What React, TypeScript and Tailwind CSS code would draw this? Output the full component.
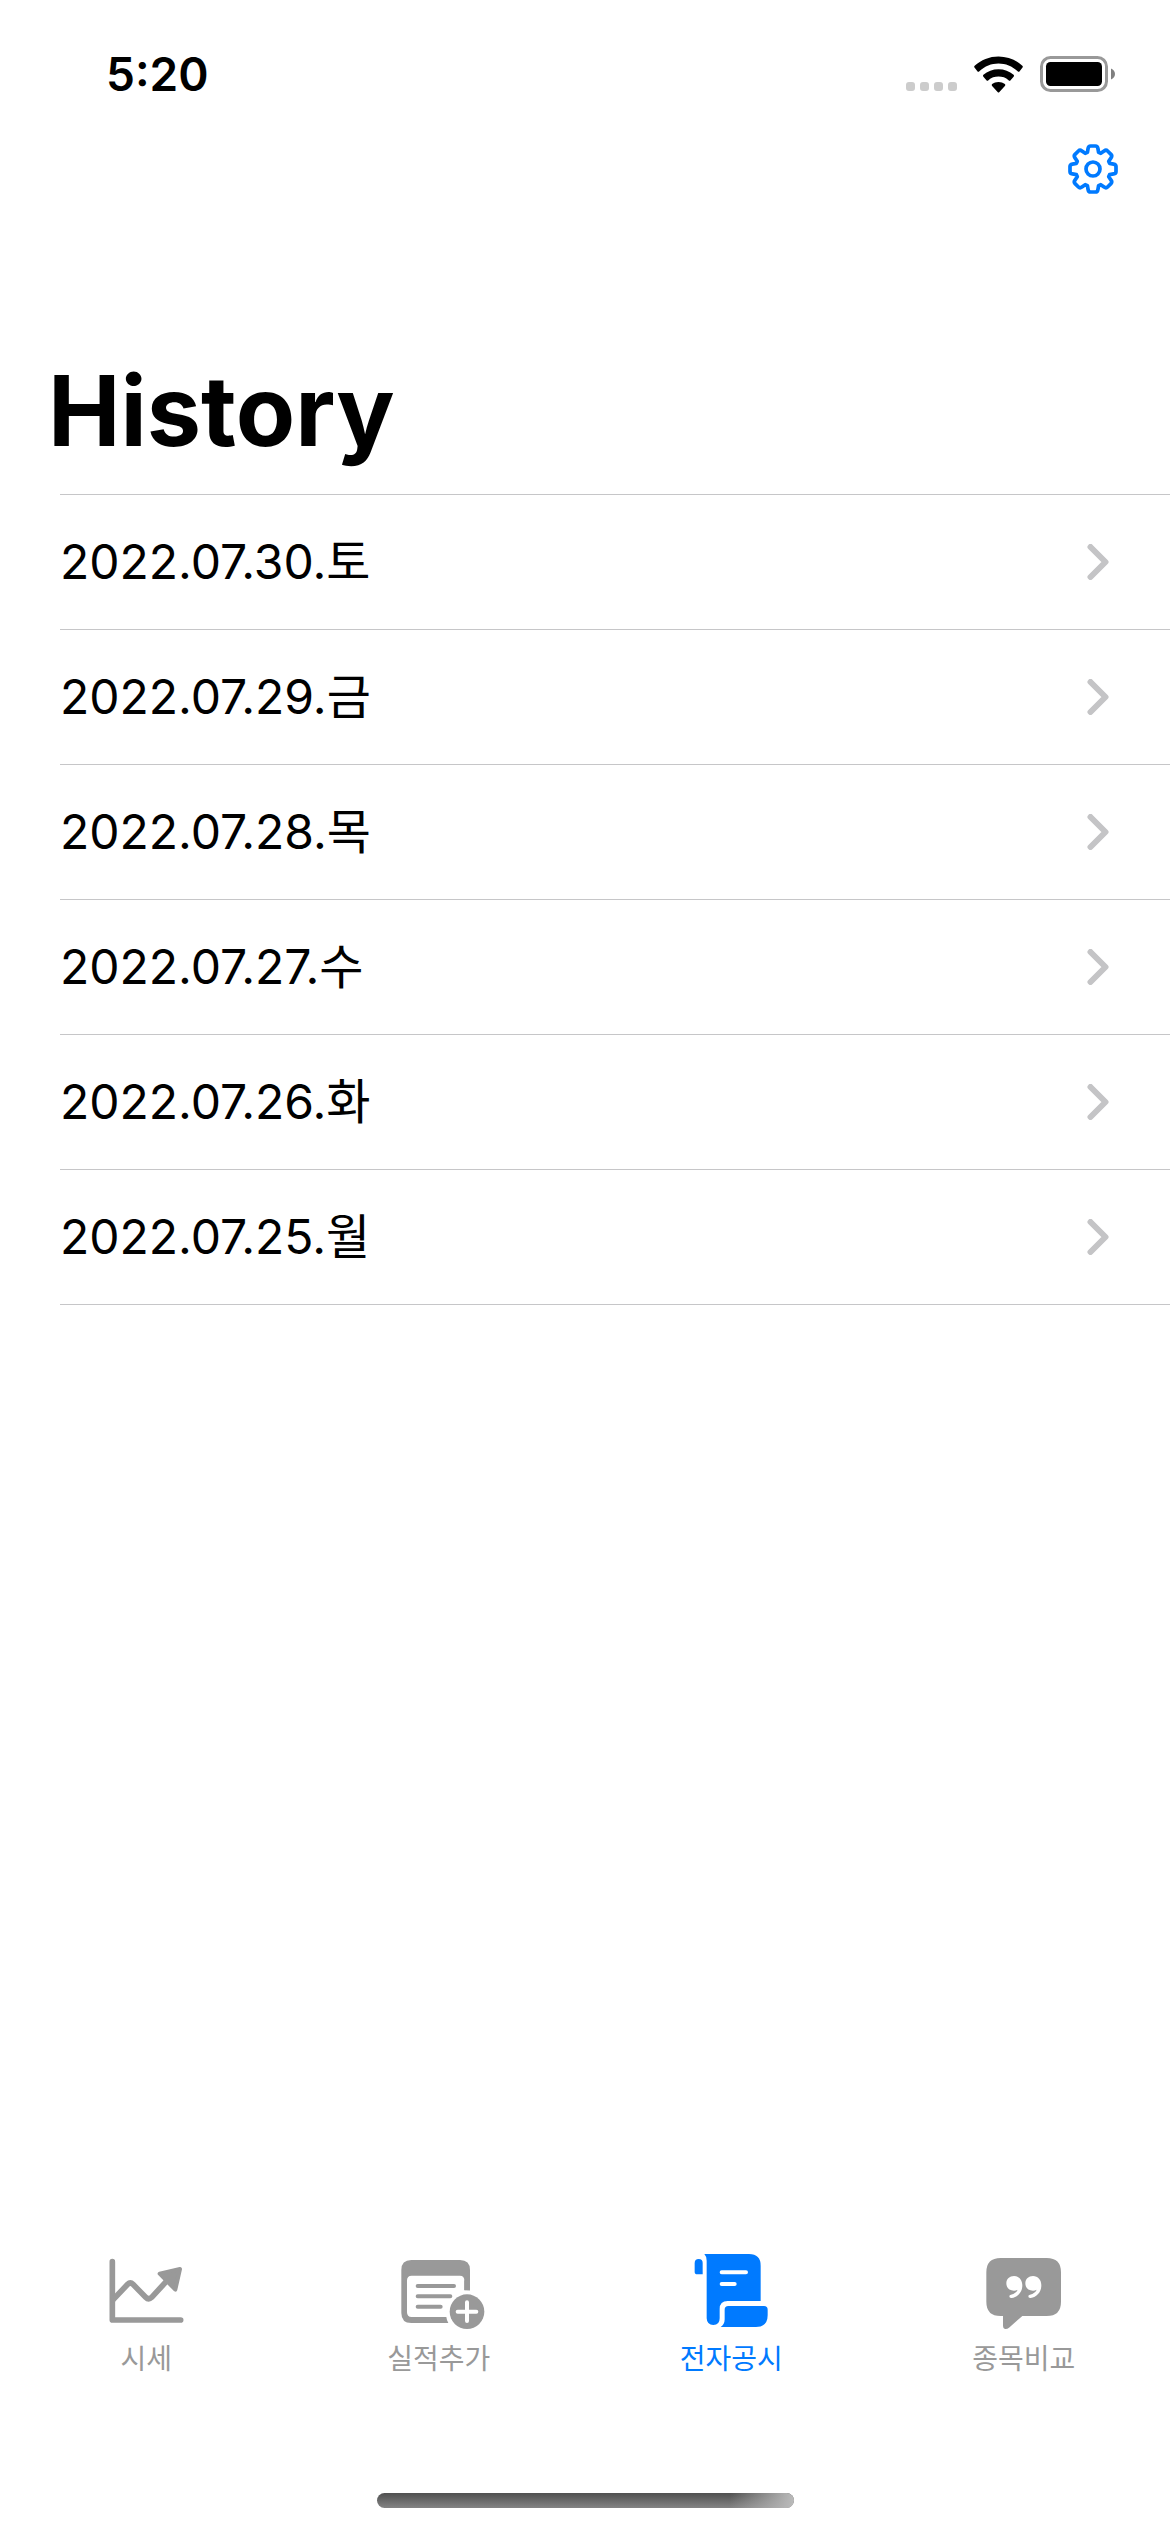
import type { ReactNode } from "react";

const dates = [
  "2022.07.30.토",
  "2022.07.29.금",
  "2022.07.28.목",
  "2022.07.27.수",
  "2022.07.26.화",
  "2022.07.25.월",
];

function SignalDots() {
  return (
    <svg viewBox="0 0 51 9" className="h-[9px] w-[51px] fill-[#cccccc]" aria-hidden="true">
      {[0, 14, 28, 42].map((x) => (
        <rect key={x} x={x} width="9" height="9" rx="3" />
      ))}
    </svg>
  );
}

function WifiIcon() {
  return (
    <svg viewBox="284 74 146 110" className="h-[37px] w-[49px]" fill="black" aria-hidden="true">
      <path d="M357 75C384 75 409 85 428 103Q431 106 428 109L420 119Q417 122 414 119C398 104 378 96 357 96S316 104 300 119Q297 122 294 119L286 109Q283 106 286 103C305 85 330 75 357 75Z" />
      <path d="M357 113C374 113 390 119 402 130Q405 133 402 136L393 146Q390 149 387 146C379 138 368 135 357 135S335 138 327 146Q324 149 321 146L312 136Q309 133 312 130C324 119 340 113 357 113Z" />
      <path d="M357 151C364 151 371 153 376 157Q379 160 376 163L359 182Q357 184 355 182L338 163Q335 160 338 157C343 153 350 151 357 151Z" />
    </svg>
  );
}

function BatteryIcon() {
  return (
    <svg viewBox="0 0 75 36" className="h-9 w-[75px]" aria-hidden="true">
      <rect x="1.5" y="1.5" width="65" height="33" rx="9" fill="none" stroke="#999999" strokeWidth="3" />
      <rect x="6" y="6" width="56" height="24" rx="4.5" fill="black" />
      <path d="M71 12.5C73.500 13.500 75 15.500 75 18S73.500 22.500 71 23.500Z" fill="#808080" />
    </svg>
  );
}

/* One tooth of the gear, pointing up, in coordinates relative to its centre. */
const tooth: [number, number][] = [
  [-5.6, -16.6],
  [-4.9, -20.6],
  [-4.5, -23],
  [-2.4, -23],
  [2.4, -23],
  [4.5, -23],
  [4.9, -20.6],
  [5.6, -16.6],
];

const gearPath =
  Array.from({ length: 8 }, (_, i) => {
    const a = (i * Math.PI) / 4;
    const [p0, p1, p2, p3, p4, p5, p6, p7] = tooth.map(
      ([x, y]) =>
        `${(x * Math.cos(a) - y * Math.sin(a)).toFixed(2)} ${(x * Math.sin(a) + y * Math.cos(a)).toFixed(2)}`,
    );
    return `${i === 0 ? "M" : "L"}${p0}L${p1}Q${p2} ${p3}L${p4}Q${p5} ${p6}L${p7}`;
  }).join("") + "Z";

function GearIcon() {
  return (
    <svg viewBox="-25 -25 50 50" className="size-[50px]" fill="none" stroke="#007aff" strokeLinejoin="round" aria-hidden="true">
      <path d={gearPath} strokeWidth="3.7" />
      <circle r="7" strokeWidth="3.7" />
    </svg>
  );
}

function Chevron() {
  return (
    <svg viewBox="0 0 22 36" className="h-9 w-[22px]" fill="none" stroke="#c4c4c6" strokeWidth="6" strokeLinecap="round" strokeLinejoin="round" aria-hidden="true">
      <path d="M3.500 3L18.500 18L3.500 33" />
    </svg>
  );
}

function ChartIcon() {
  return (
    <svg viewBox="43 60 252 252" className="size-[84px]" fill="none" stroke="currentColor" strokeLinecap="round" strokeLinejoin="round" aria-hidden="true">
      <path d="M68 95V270H273" strokeWidth="17" />
      <path d="M70 209L114 163Q122 155 130 163L168 202Q177 211 186 202L232 152" strokeWidth="17" />
      <path d="M210 131L271 117L257 179Z" fill="currentColor" strokeWidth="12" />
    </svg>
  );
}

function AddNoteIcon() {
  return (
    <svg viewBox="80 60 252 252" className="size-[84px] overflow-visible" fill="currentColor" aria-hidden="true">
      <path fillRule="evenodd" d="M123 90H269Q299 90 299 120V181Q291 179 282 180V151Q282 137 269 137H124Q110 137 110 151V247Q110 261 124 261H228Q229 270 234 279H123Q93 279 93 249V120Q93 90 123 90Z" />
      <g fill="none" stroke="currentColor" strokeWidth="12" strokeLinecap="round">
        <path d="M142 168H251M142 199H240M142 230H211" />
      </g>
      <circle cx="290" cy="245" r="61" fill="white" />
      <path d="M282 151V181H299V151Z" />
      <circle cx="290" cy="245" r="52" />
      <path d="M290 217V273M262 245H318" fill="none" stroke="white" strokeWidth="12" strokeLinecap="round" />
    </svg>
  );
}

function ScrollIcon() {
  return (
    <svg viewBox="58 60 252 252" className="size-[84px]" fill="currentColor" aria-hidden="true">
      <path d="M99 133H83Q75 133 75 125V99Q75 87 87 87T99 99Z" />
      <path d="M104 72H238Q273 72 273 107V213H174Q150 213 150 237V265Q150 285 131 285T111 265V92Q111 79 104 72Z" />
      <path d="M153 291Q165 283 165 268V239Q165 228 176 228H283Q294 228 294 239V256Q294 291 259 291Z" />
      <path d="M156 127H229M156 162H195" fill="none" stroke="white" strokeWidth="12" strokeLinecap="round" />
    </svg>
  );
}

function QuoteIcon() {
  return (
    <svg viewBox="65 60 252 252" className="size-[84px]" fill="currentColor" aria-hidden="true">
      <path d="M121 84H259Q302 84 302 127V215Q302 258 259 258H186L146 293Q140 298 134 297T128 288V258H121Q78 258 78 215V127Q78 84 121 84Z" />
      <g fill="white">
        <path id="quote-mark" d="M161 138C176 138 186 150 186 166C186 187 172 201 154 204Q147 205 147 199Q147 195 152 194C162 191 169 186 172 179Q167 182 161 182C147 182 138 173 138 160S148 138 161 138Z" />
        <use href="#quote-mark" x="57" />
      </g>
    </svg>
  );
}

const tabs: { label: string; icon: ReactNode; active?: boolean }[] = [
  { label: "시세", icon: <ChartIcon /> },
  { label: "실적추가", icon: <AddNoteIcon /> },
  { label: "전자공시", icon: <ScrollIcon />, active: true },
  { label: "종목비교", icon: <QuoteIcon /> },
];

export default function App() {
  return (
    <div className="flex min-h-screen flex-col bg-white font-['Inter','Noto_Sans_CJK_KR',sans-serif] text-black">
      <div className="flex h-[132px] items-center justify-between pt-4 pr-[55px] pl-[106px]">
        <time className="text-[46px] leading-[56px] font-semibold">5:20</time>
        <div className="flex items-center">
          <div className="mr-[17px] flex items-end">
            <div className="mr-[17px] mb-0.5">
              <SignalDots />
            </div>
            <WifiIcon />
          </div>
          <BatteryIcon />
        </div>
      </div>

      <header>
        <div className="flex h-[74px] items-center justify-end pr-[52px]">
          <button type="button" aria-label="Settings">
            <GearIcon />
          </button>
        </div>
        <h1 className="mt-[145px] pl-12 text-[97px] leading-[120px] font-bold">History</h1>
      </header>

      <main className="mt-[23px] flex-1 pl-[60px]">
        <ul className="border-t border-[#c6c6c8]">
          {dates.map((date) => (
            <li key={date} className="border-b border-[#c6c6c8]">
              <a href="#" className="flex h-[134px] items-center justify-between pr-[61px]">
                <span className="text-[48px] leading-[60px]">{date}</span>
                <Chevron />
              </a>
            </li>
          ))}
        </ul>
      </main>

      <nav className="grid grid-cols-4">
        {tabs.map((tab) => (
          <button
            key={tab.label}
            type="button"
            aria-current={tab.active ? "page" : undefined}
            className={`flex flex-col items-center gap-[9px] ${tab.active ? "text-[#007aff]" : "text-[#999999]"}`}
          >
            {tab.icon}
            <span className="text-[28px] leading-8">{tab.label}</span>
          </button>
        ))}
      </nav>

      <div className="flex justify-center pt-[118px] pb-6">
        <div className="flex h-[15px] w-[417px] justify-end overflow-hidden rounded-full bg-linear-to-b from-[#505050] to-[#848484]">
          <div className="w-16 bg-linear-to-r from-transparent to-[#bbbbbb]" />
        </div>
      </div>
    </div>
  );
}
